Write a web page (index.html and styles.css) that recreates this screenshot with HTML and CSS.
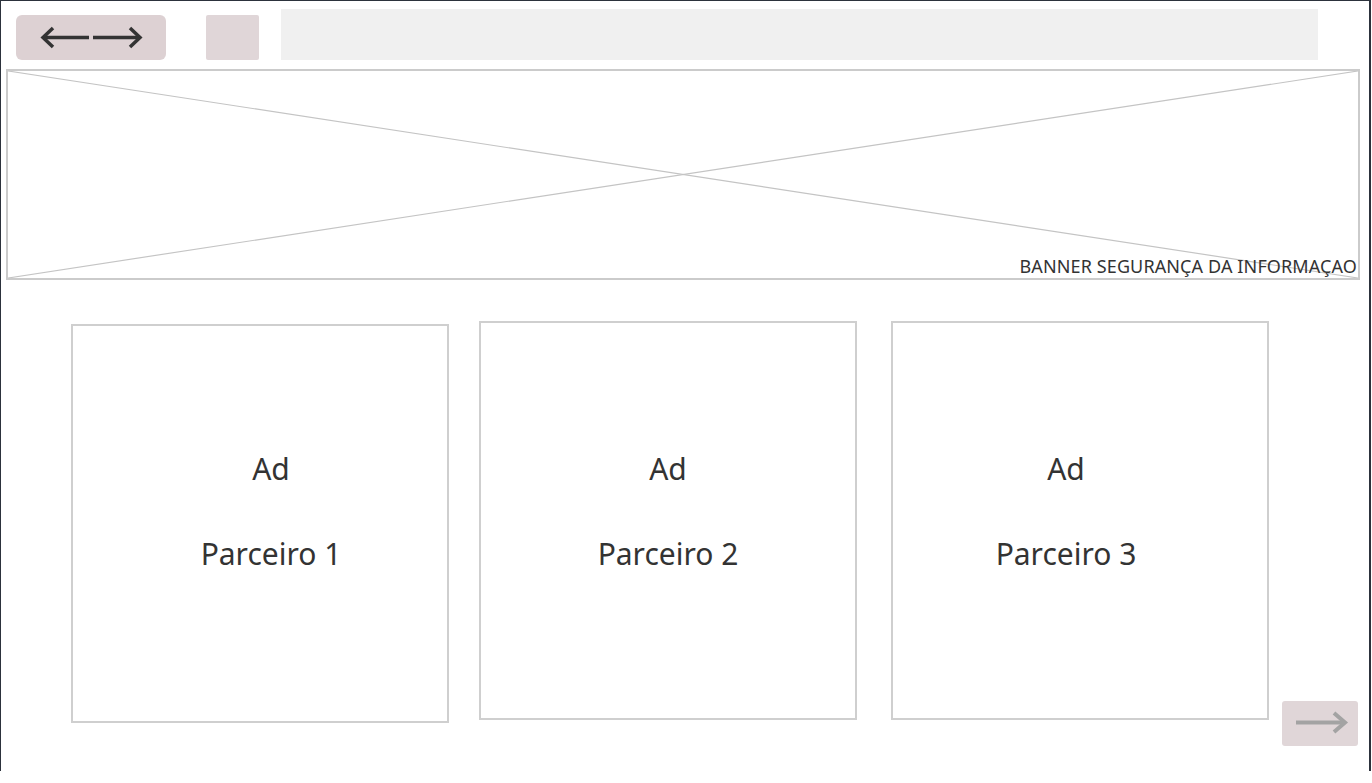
FILE: index.html
```html
<!DOCTYPE html>
<html>
<head>
    <title>Parceiros</title>
    <link rel="stylesheet" href="styles.css">
</head>
<body>
    <div class="frame">
        <div class="topbar">
            <div class="nav_btn">
                <svg width="150" height="45" viewBox="0 0 150 45">
                    <line x1="27" y1="22.5" x2="73" y2="22.5" stroke="#333" stroke-width="3.5"/>
                    <polyline points="37,13 27,22.5 37,32" fill="none" stroke="#333" stroke-width="3.5"/>
                    <line x1="77" y1="22.5" x2="124" y2="22.5" stroke="#333" stroke-width="3.5"/>
                    <polyline points="114,13 124,22.5 114,32" fill="none" stroke="#333" stroke-width="3.5"/>
                </svg>
            </div>
            <div class="small_btn"></div>
            <div class="search"></div>
        </div>

        <div class="banner">
            <svg class="banner_x" width="100%" height="100%" viewBox="0 0 1353 211" preserveAspectRatio="none">
                <line x1="0" y1="0" x2="1353" y2="211" stroke="#c4c4c4" stroke-width="1.2"/>
                <line x1="0" y1="211" x2="1353" y2="0" stroke="#c4c4c4" stroke-width="1.2"/>
            </svg>
            <span class="banner_txt">BANNER SEGURANÇA DA INFORMAÇAO</span>
        </div>

        <div class="cards">
            <div class="card card_low">
                <p>Ad</p>
                <p>Parceiro 1</p>
            </div>
            <div class="card">
                <p>Ad</p>
                <p>Parceiro 2</p>
            </div>
            <div class="card card_wide">
                <p>Ad</p>
                <p>Parceiro 3</p>
            </div>
            <div class="next_btn">
                <svg width="76" height="45" viewBox="0 0 76 45">
                    <line x1="14" y1="21.5" x2="62" y2="21.5" stroke="#a3a3a3" stroke-width="4"/>
                    <polyline points="52,12 63,21.5 52,31" fill="none" stroke="#a3a3a3" stroke-width="4"/>
                </svg>
            </div>
        </div>
    </div>
</body>
</html>
```

FILE: styles.css
```css
body { margin: 0; background: #fff; font-family: "Noto Sans", "Open Sans", sans-serif; color: #333; }
.frame { box-sizing: border-box; width: 1371px; height: 771px; border: 1px solid #2c323c; border-bottom: none; border-right-width: 2px; }

.topbar { display: flex; align-items: flex-end; padding: 8px 0 0 15px; }
.nav_btn { width: 150px; height: 45px; background: #ddd1d3; border-radius: 6px; }
.nav_btn svg { display: block; }
.small_btn { width: 53px; height: 45px; margin-left: 40px; background: #e0d6d8; border-radius: 2px; }
.search { width: 1037px; height: 51px; margin-left: 22px; background: #f0f0f0; }

.banner { position: relative; box-sizing: border-box; width: 1354px; height: 211px; margin: 9px 0 0 5px; border: 2px solid #cbcbcb; display: flex; align-items: flex-end; justify-content: flex-end; }
.banner_x { position: absolute; top: 0; left: 0; }
.banner_txt { position: relative; font-size: 18px; line-height: 24px; letter-spacing: 0.12px; padding: 0 1px 0 0; color: #333; }

.cards { display: flex; align-items: flex-start; padding: 41px 0 0 70px; gap: 30px; }
.card { box-sizing: border-box; width: 378px; height: 399px; border: 2px solid #cfcfcf; display: flex; flex-direction: column; align-items: center; justify-content: center; padding-bottom: 18px; }
.card p { margin: 0; font-size: 30px; line-height: 40px; }
.card p + p { margin-top: 45px; }
.card_low { margin-top: 3px; padding: 0 0 24px 22px; }
.card_wide { margin-left: 4px; padding-right: 28px; }
.next_btn { width: 76px; height: 45px; margin: 380px 0 0 -17px; background: #e0d6d8; border-radius: 3px; }
.next_btn svg { display: block; }
```
